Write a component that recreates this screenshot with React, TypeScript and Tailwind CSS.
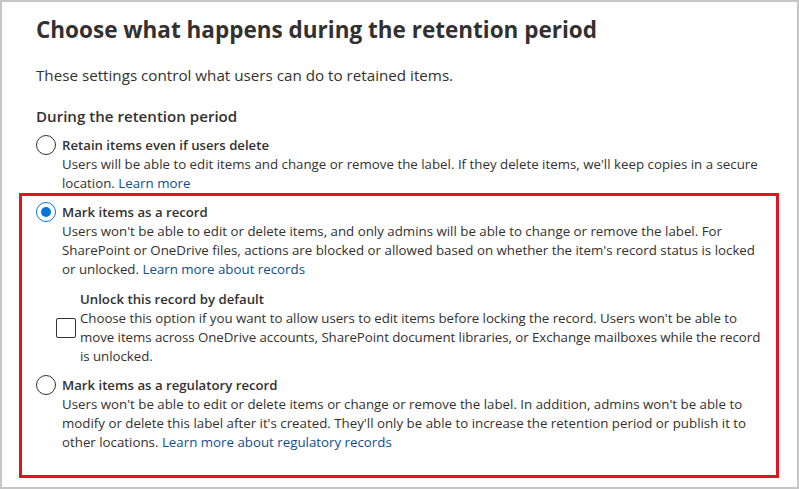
import React from "react";

const LINK = "text-[#0e4f8f]";

function Radio({ checked }: { checked?: boolean }) {
  return checked ? (
    <span className="flex h-[20px] w-[20px] shrink-0 items-center justify-center rounded-full border border-[#0078d4]">
      <span className="h-[10px] w-[10px] rounded-full bg-[#0078d4]" />
    </span>
  ) : (
    <span className="h-[20px] w-[20px] shrink-0 rounded-full border border-[#323130]" />
  );
}

function Option({
  checked,
  label,
  lines,
}: {
  checked?: boolean;
  label: string;
  lines: React.ReactNode[];
}) {
  return (
    <div className="flex flex-col">
      <div className="flex h-[20px] items-center gap-[6px]">
        <Radio checked={checked} />
        <span className="whitespace-nowrap text-[13.2px] font-semibold leading-[20px] text-[#323130]">{label}</span>
      </div>
      <div className="pl-[26px] text-[13.3px] leading-[19px] text-[#323130]">
        {lines.map((l, i) => (
          <div key={i} className="whitespace-nowrap">
            {l}
          </div>
        ))}
      </div>
    </div>
  );
}

export default function App() {
  return (
    <div className="h-[489px] w-[799px] overflow-hidden border-2 border-[#c6c6c6] bg-white pl-[17px] font-['Open_Sans',sans-serif] text-[15.2px] text-[#323130]">
      <div className="pl-[17px]">
        <h1 className="mt-[12px] whitespace-nowrap text-[22.5px] font-[680] leading-[32px]">
          Choose what happens during the retention period
        </h1>
        <p className="mt-[19px] leading-[20px]">These settings control what users can do to retained items.</p>
        <h2 className="mt-[20px] text-[15.1px] font-semibold leading-[22px]">During the retention period</h2>
        <div className="mt-[8px]">
          <Option
            label="Retain items even if users delete"
            lines={[
              "Users will be able to edit items and change or remove the label. If they delete items, we'll keep copies in a secure",
              <>
                location. <span className={LINK}>Learn more</span>
              </>,
            ]}
          />
        </div>
      </div>
      <div className="w-[760px] border-[3px] border-[#e81123] pb-[23px] pl-[14px] pt-[6px]">
        <Option
          checked
          label="Mark items as a record"
          lines={[
            "Users won't be able to edit or delete items, and only admins will be able to change or remove the label. For",
            "SharePoint or OneDrive files, actions are blocked or allowed based on whether the item's record status is locked",
            <>
              or unlocked. <span className={LINK}>Learn more about records</span>
            </>,
          ]}
        />
        <div className="mt-[10px] flex items-center gap-[4px] pl-[20px]">
          <span className="h-[20px] w-[20px] shrink-0 rounded-[2px] border border-[#323130]" />
          <div className="flex flex-col">
            <span className="whitespace-nowrap text-[13.2px] font-semibold leading-[20px]">
              Unlock this record by default
            </span>
            <div className="text-[13.3px] leading-[19px] tracking-[-0.05px]">
              <div className="whitespace-nowrap">
                Choose this option if you want to allow users to edit items before locking the record. Users won't be able to
              </div>
              <div className="whitespace-nowrap">
                move items across OneDrive accounts, SharePoint document libraries, or Exchange mailboxes while the record
              </div>
              <div className="whitespace-nowrap">is unlocked.</div>
            </div>
          </div>
        </div>
        <div className="mt-[9px]">
          <Option
            label="Mark items as a regulatory record"
            lines={[
              "Users won't be able to edit or delete items or change or remove the label. In addition, admins won't be able to",
              "modify or delete this label after it's created. They'll only be able to increase the retention period or publish it to",
              <>
                other locations. <span className={LINK}>Learn more about regulatory records</span>
              </>,
            ]}
          />
        </div>
      </div>
    </div>
  );
}
